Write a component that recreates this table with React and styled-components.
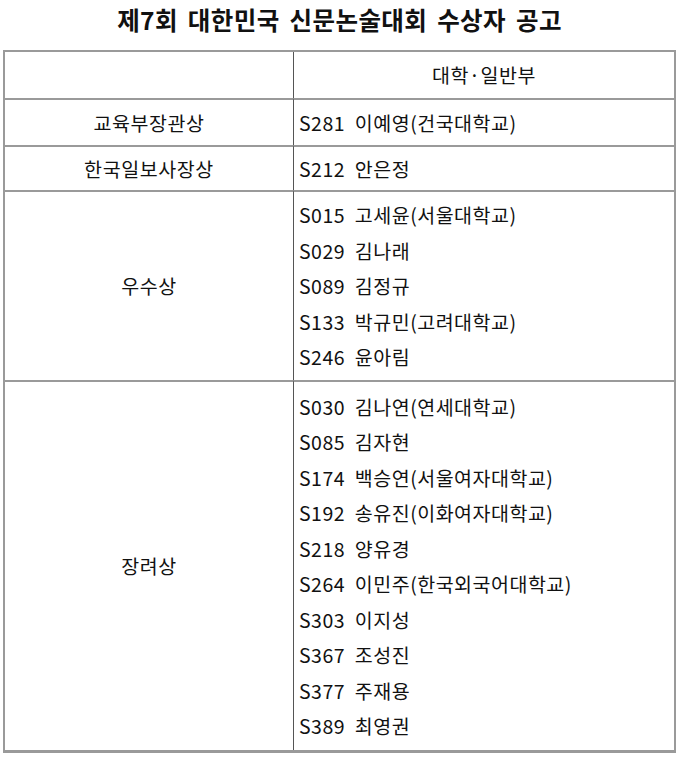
import React from "react";
import styled, { createGlobalStyle } from "styled-components";

const GlobalStyle = createGlobalStyle`
    html, body {
        margin: 0;
        padding: 0;
        background: #fff;
    }
    body {
        font-family: "Noto Sans CJK KR", "Noto Sans", sans-serif;
        color: #111;
    }
`;

const Page = styled.div`
    width: 680px;
    padding: 4px 4px 0 3px;
    box-sizing: border-box;
`;

const Title = styled.h1`
    margin: 0;
    height: 46px;
    font-size: 24.5px;
    font-weight: 700;
    line-height: 32px;
    text-align: center;
    letter-spacing: 0.4px;
    word-spacing: 4px;
    color: #111;
`;

const Table = styled.div`
    display: grid;
    grid-template-columns: 288px 1fr;
    border: 2px solid #9a9a9a;
    border-bottom-width: 3px;
`;

const Cell = styled.div`
    display: flex;
    flex-direction: column;
    justify-content: center;
    align-items: ${({ center }) => (center ? "center" : "flex-start")};
    min-height: ${({ h }) => h}px;
    box-sizing: border-box;
    padding: 0 0 0 ${({ center }) => (center ? 0 : 5)}px;
    border-top: ${({ first }) => (first ? "none" : "2px solid #9a9a9a")};
    border-left: ${({ right }) => (right ? "1px solid #555" : "none")};
    font-size: 19.5px;
    line-height: 35.5px;
    letter-spacing: 0.6px;
`;

const Line = styled.div`
    white-space: pre;
    letter-spacing: 0.5px;
`;

const rows = [
    { award: "교육부장관상", h: 47, items: ["S281  이예영(건국대학교)"] },
    { award: "한국일보사장상", h: 45, items: ["S212  안은정"] },
    {
        award: "우수상",
        h: 190,
        items: [
            "S015  고세윤(서울대학교)",
            "S029  김나래",
            "S089  김정규",
            "S133  박규민(고려대학교)",
            "S246  윤아림",
        ],
    },
    {
        award: "장려상",
        h: 370,
        items: [
            "S030  김나연(연세대학교)",
            "S085  김자현",
            "S174  백승연(서울여자대학교)",
            "S192  송유진(이화여자대학교)",
            "S218  양유경",
            "S264  이민주(한국외국어대학교)",
            "S303  이지성",
            "S367  조성진",
            "S377  주재용",
            "S389  최영권",
        ],
    },
];

export default function App() {
    return (
        <Page>
            <GlobalStyle />
            <Title>제7회 대한민국 신문논술대회 수상자 공고</Title>
            <Table>
                <Cell center first h={46} />
                <Cell center first right h={46}>
                    대학·일반부
                </Cell>
                {rows.map(row => (
                    <React.Fragment key={row.award}>
                        <Cell center h={row.h}>
                            {row.award}
                        </Cell>
                        <Cell right h={row.h}>
                            {row.items.map(item => (
                                <Line key={item}>{item}</Line>
                            ))}
                        </Cell>
                    </React.Fragment>
                ))}
            </Table>
        </Page>
    );
}
